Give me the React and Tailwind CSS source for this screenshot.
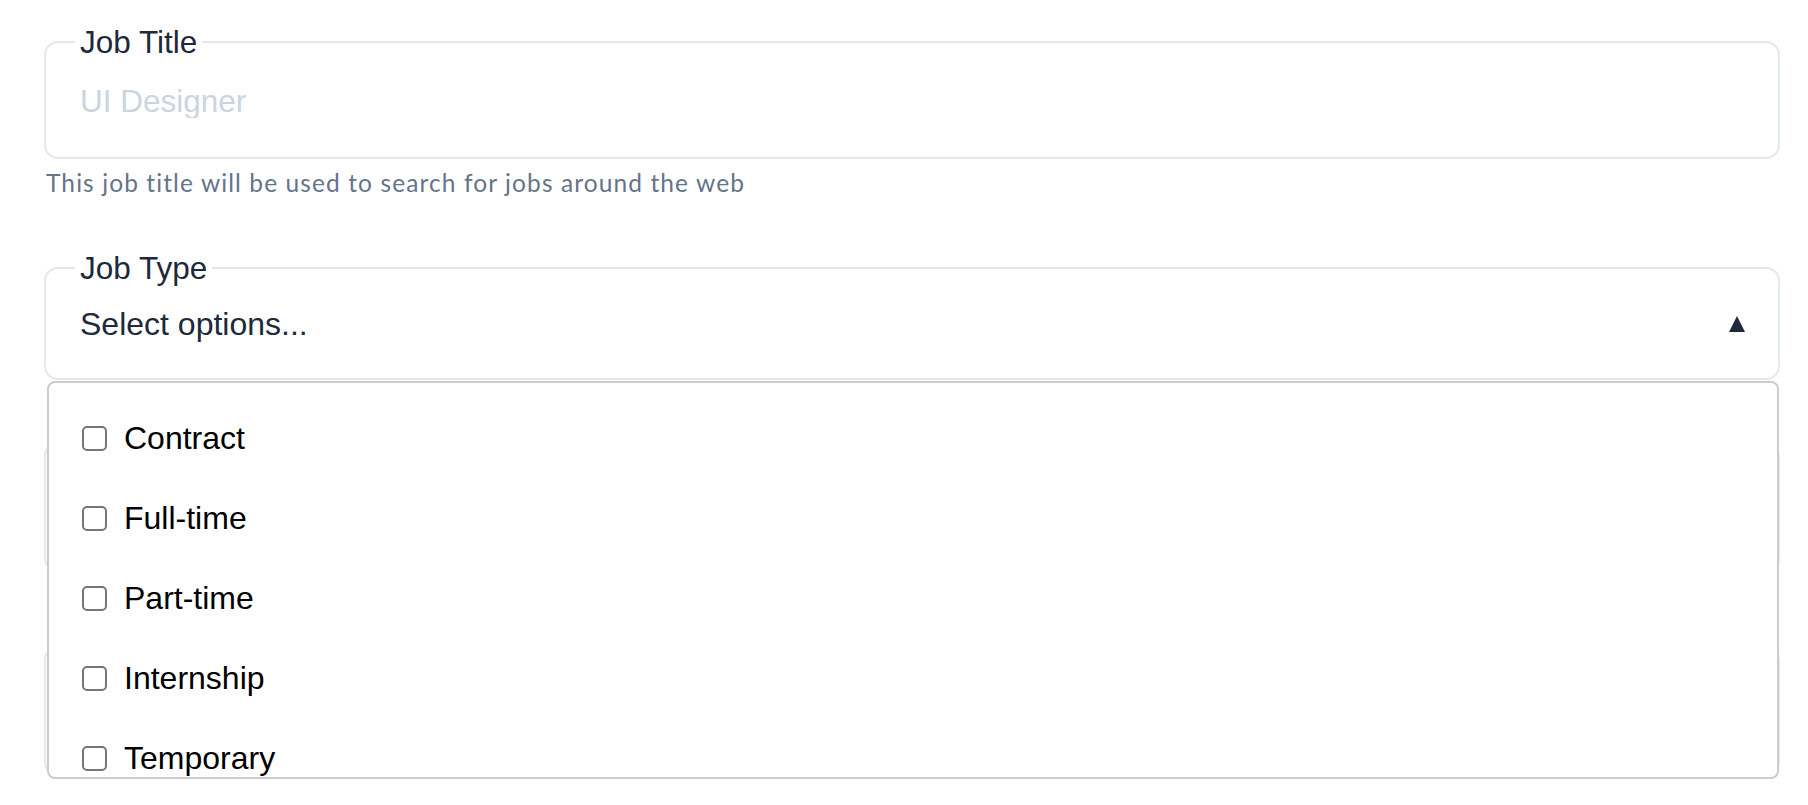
import React from "react";

const OPTIONS = ["Contract", "Full-time", "Part-time", "Internship", "Temporary", "Volunteer", "Other"];

function Field({ label, children, className = "" }) {
  return (
    <fieldset className={`border-2 border-[#e2e8f0] rounded-[14px] px-[29px] ${className}`}>
      <legend className="px-[5px] text-[31.5px] leading-[34px] text-[#1e293b]">{label}</legend>
      {children}
    </fieldset>
  );
}

export default function App() {
  return (
    <div className="min-h-screen bg-white pt-[25px] pl-[44px] pr-[28px] font-['Liberation_Sans',Arial,sans-serif]">
      <Field label="Job Title" className="pt-[25px] pb-[39px]">
        <input
          placeholder="UI Designer"
          className="block w-full h-[34px] px-[5px] text-[31.5px] leading-[34px] text-[#1e293b] outline-none bg-transparent placeholder:text-[#cbd5e1]"
        />
      </Field>
      <p className="mt-[10px] pl-[2px] text-[24.5px] leading-[28px] tracking-[1.1px] text-[#64748b] font-['Lato',sans-serif]">
        This job title will be used to search for jobs around the web
      </p>

      <div className="relative mt-[54px]">
        <Field label="Job Type" className="pt-[22px] pb-[37px]">
          <div className="flex items-center justify-between h-[34px] px-[5px]">
            <span className="text-[32px] leading-[34px] text-[#1e293b]">Select options...</span>
            <svg width="16" height="16" viewBox="0 0 16 16" className="mr-[-1px]">
              <polygon points="8,0 16,16 0,16" fill="#1e293b" />
            </svg>
          </div>
        </Field>

        <div className="absolute z-10 left-[3px] right-[1px] top-[calc(100%+1px)] h-[398px] overflow-hidden rounded-[8px] border-2 border-[#cccccc] bg-white pt-[15px] pl-[33px]">
          {OPTIONS.map((o) => (
            <label key={o} className="flex h-[80px] items-center gap-[17px]">
              <span className="block w-[25px] h-[25px] shrink-0 rounded-[5px] border-2 border-[#767676] bg-white" />
              <span className="text-[32px] leading-[34px] text-black">{o}</span>
            </label>
          ))}
        </div>
      </div>

      <Field label="Location" className="mt-[46px] pt-[26px] pb-[50px]">
        <input
          placeholder="Remote"
          className="block w-full h-[34px] px-[5px] text-[31.5px] leading-[34px] outline-none bg-transparent placeholder:text-[#cbd5e1]"
        />
      </Field>

      <Field label="Experience Level" className="mt-[58px] pt-[26px] pb-[50px]">
        <input
          placeholder="Select options..."
          className="block w-full h-[34px] px-[5px] text-[31.5px] leading-[34px] outline-none bg-transparent placeholder:text-[#cbd5e1]"
        />
      </Field>
    </div>
  );
}
